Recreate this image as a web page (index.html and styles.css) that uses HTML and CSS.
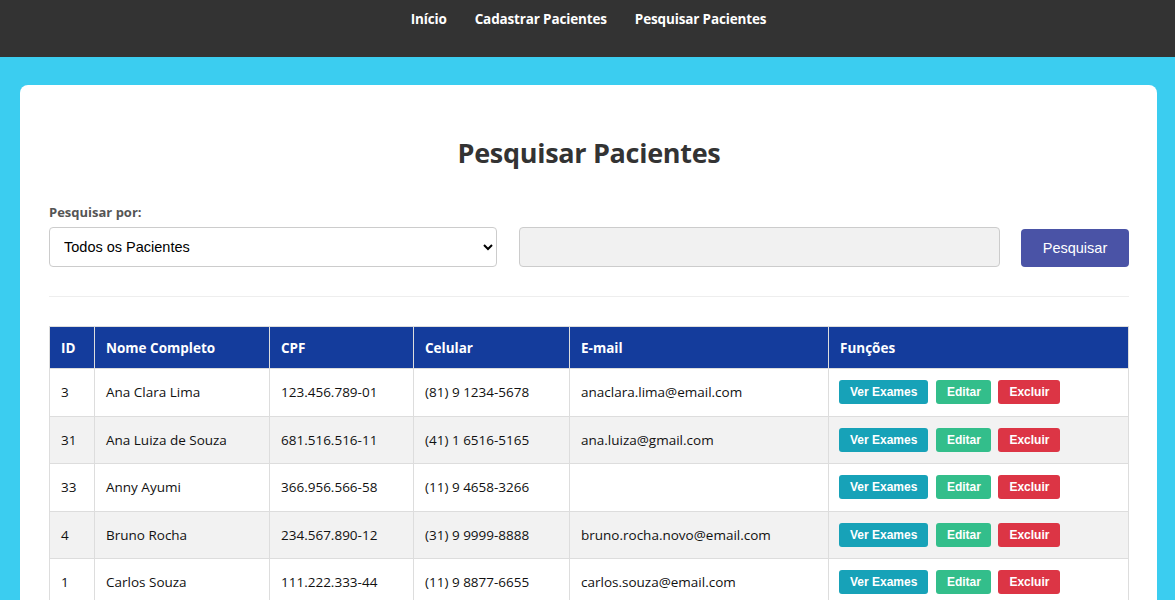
FILE: index.html
```html
<!DOCTYPE html>
<html lang="pt-BR">
<head>
<meta charset="utf-8">
<title>Pesquisar Pacientes</title>
<link rel="stylesheet" href="styles.css">
</head>
<body>
<nav class="topnav">
  <a href="#">Início</a>
  <a href="#">Cadastrar Pacientes</a>
  <a href="#">Pesquisar Pacientes</a>
</nav>
<main class="card">
  <h1 class="title">Pesquisar Pacientes</h1>
  <form class="search">
    <label class="search-label">Pesquisar por:</label>
    <div class="search-row">
      <select class="search-select">
        <option>Todos os Pacientes</option>
      </select>
      <input class="search-input" type="text" disabled>
      <button class="search-btn" type="button">Pesquisar</button>
    </div>
  </form>
  <hr class="divider">
  <table class="patients">
    <thead>
      <tr>
        <th class="c-id">ID</th>
        <th class="c-nome">Nome Completo</th>
        <th class="c-cpf">CPF</th>
        <th class="c-cel">Celular</th>
        <th class="c-mail">E-mail</th>
        <th>Funções</th>
      </tr>
    </thead>
    <tbody>
      <tr>
        <td>3</td><td>Ana Clara Lima</td><td>123.456.789-01</td><td>(81) 9 1234-5678</td><td>anaclara.lima@email.com</td>
        <td class="actions"><button class="btn btn-exam">Ver Exames</button><button class="btn btn-edit">Editar</button><button class="btn btn-del">Excluir</button></td>
      </tr>
      <tr>
        <td>31</td><td>Ana Luiza de Souza</td><td>681.516.516-11</td><td>(41) 1 6516-5165</td><td>ana.luiza@gmail.com</td>
        <td class="actions"><button class="btn btn-exam">Ver Exames</button><button class="btn btn-edit">Editar</button><button class="btn btn-del">Excluir</button></td>
      </tr>
      <tr>
        <td>33</td><td>Anny Ayumi</td><td>366.956.566-58</td><td>(11) 9 4658-3266</td><td></td>
        <td class="actions"><button class="btn btn-exam">Ver Exames</button><button class="btn btn-edit">Editar</button><button class="btn btn-del">Excluir</button></td>
      </tr>
      <tr>
        <td>4</td><td>Bruno Rocha</td><td>234.567.890-12</td><td>(31) 9 9999-8888</td><td>bruno.rocha.novo@email.com</td>
        <td class="actions"><button class="btn btn-exam">Ver Exames</button><button class="btn btn-edit">Editar</button><button class="btn btn-del">Excluir</button></td>
      </tr>
      <tr>
        <td>1</td><td>Carlos Souza</td><td>111.222.333-44</td><td>(11) 9 8877-6655</td><td>carlos.souza@email.com</td>
        <td class="actions"><button class="btn btn-exam">Ver Exames</button><button class="btn btn-edit">Editar</button><button class="btn btn-del">Excluir</button></td>
      </tr>
    </tbody>
  </table>
</main>
</body>
</html>
```
FILE: styles.css
```css
* { box-sizing: border-box; }
html, body { margin: 0; padding: 0; }
body {
  background: #3bcdf0;
  font-family: "Open Sans", "Noto Sans", sans-serif;
  color: #222;
}
.topnav {
  background: #333333;
  height: 57px;
  display: flex;
  justify-content: center;
  gap: 28px;
  padding-top: 10px;
  padding-left: 2px;
}
.topnav a {
  color: #fff;
  text-decoration: none;
  font-weight: 700;
  font-size: 13.5px;
  line-height: 18px;
  letter-spacing: -0.15px;
}
.card {
  background: #fff;
  margin: 28px 18px 0 20px;
  border-radius: 8px;
  padding: 48px 28px 40px 29px;
  min-height: 600px;
}
.title {
  margin: 0 0 31px;
  text-align: center;
  font-size: 27px;
  line-height: 40px;
  font-weight: 700;
  color: #333;
  letter-spacing: -0.3px;
}
.search-label {
  display: block;
  font-size: 13px;
  font-weight: 700;
  color: #555;
  line-height: 16px;
  margin-bottom: 7px;
}
.search-row {
  display: flex;
  align-items: center;
  gap: 22px;
}
.search-select {
  width: 448px;
  height: 40px;
  border: 1px solid #ccc;
  border-radius: 4px;
  background: #fff;
  font-family: "Liberation Sans", Arial, sans-serif;
  font-size: 14.5px;
  padding: 0 10px;
  color: #000;
}
.search-input {
  width: 481px;
  height: 40px;
  border: 1px solid #ccc;
  border-radius: 4px;
  background: #f1f1f1;
}
.search-btn {
  margin-left: -1px;
  width: 108px;
  height: 38px;
  border: 0;
  border-radius: 4px;
  background: #4a53a6;
  color: #fff;
  font-family: "Liberation Sans", Arial, sans-serif;
  font-size: 14.5px;
  margin-top: 2px;
}
.divider {
  border: 0;
  border-top: 1px solid #eee;
  margin: 29px 0 29px;
}
.patients {
  width: 100%;
  border-collapse: collapse;
  font-size: 13.5px;
}
.patients th, .patients td {
  border: 1px solid #ddd;
  text-align: left;
  padding: 0 11px;
}
.patients th {
  background: #143c9c;
  color: #fff;
  font-weight: 700;
  height: 42px;
  font-size: 13.5px;
}
.patients td {
  height: 47.5px;
  color: #111;
}
.patients tbody tr:nth-child(even) td { background: #f2f2f2; }
.c-id { width: 45px; }
.c-nome { width: 175px; }
.c-cpf { width: 144px; }
.c-cel { width: 156px; }
.c-mail { width: 259px; }
.actions { white-space: nowrap; padding-left: 10px !important; }
.btn {
  border: 0;
  border-radius: 3px;
  color: #fff;
  font-family: "Liberation Sans", Arial, sans-serif;
  font-weight: 700;
  font-size: 12px;
  height: 24px;
  padding: 0 11px;
  margin-right: 8px;
  vertical-align: middle;
}
.btn-edit { padding: 0 10.5px; margin-right: 7px; }
.btn-exam { background: #17a2b8; }
.btn-edit { background: #33be8b; }
.btn-del { background: #dc3545; }
```
